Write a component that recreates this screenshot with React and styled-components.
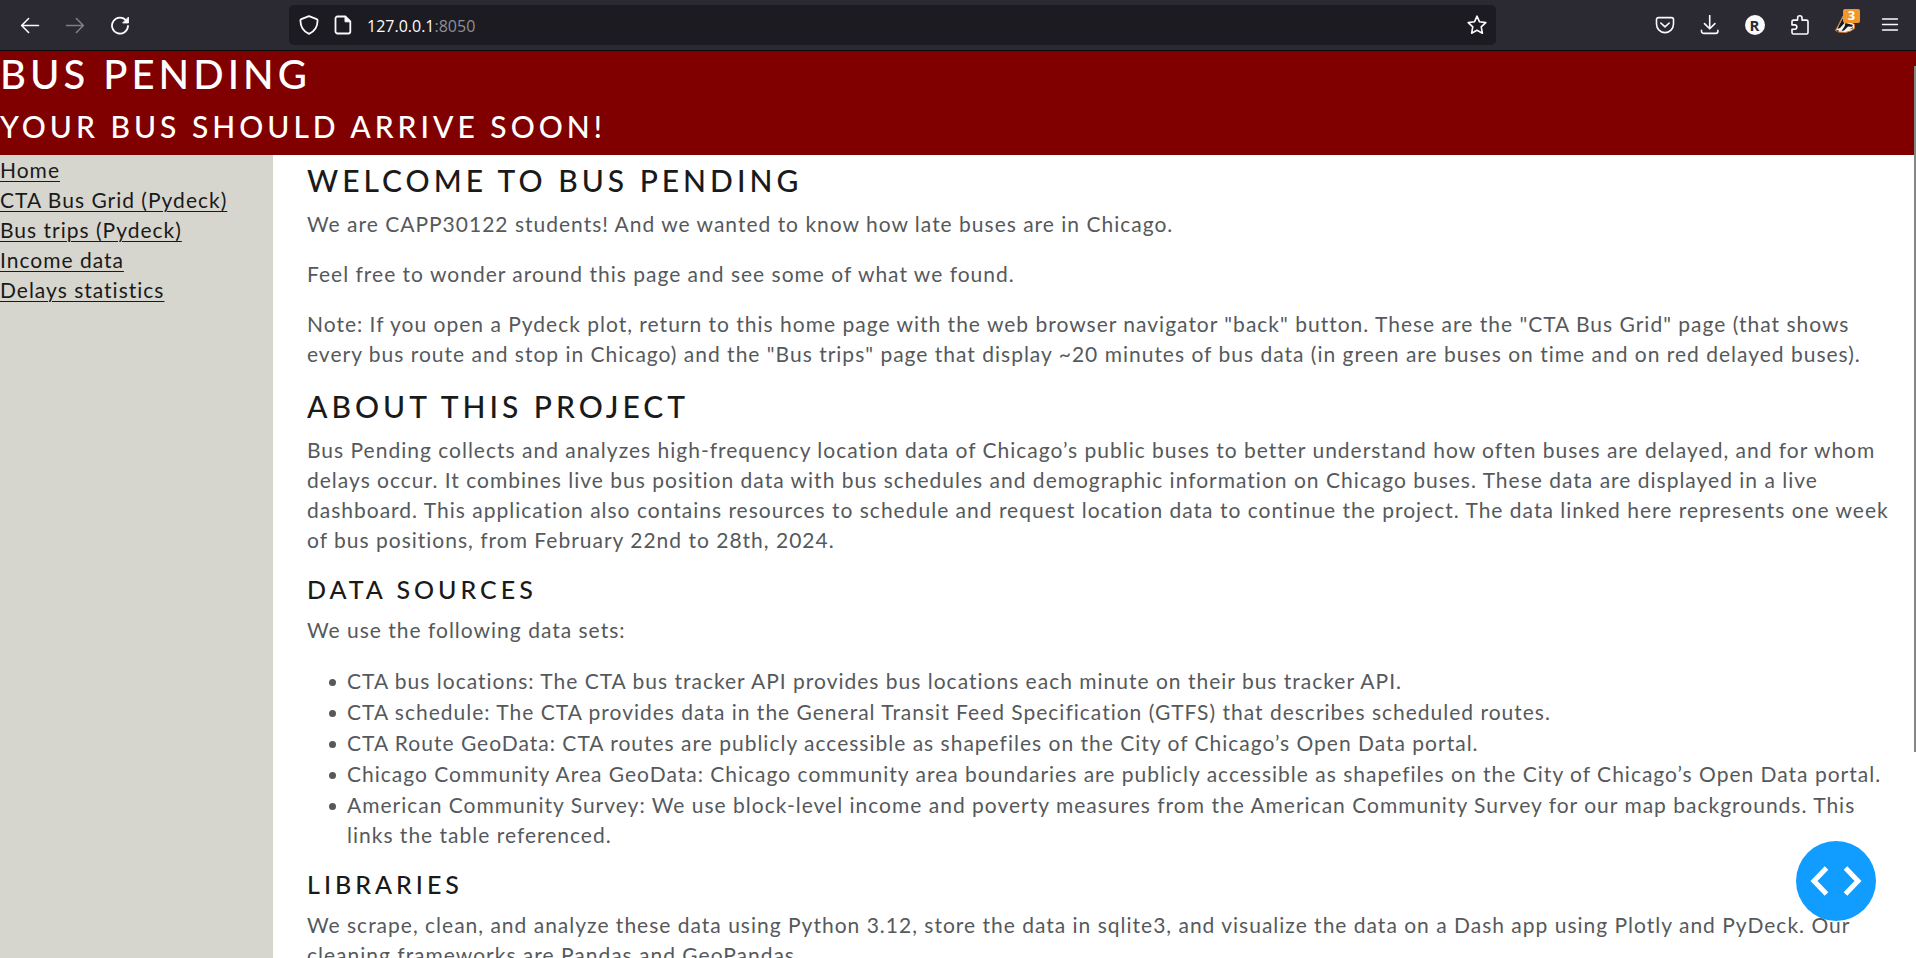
import React from 'react';
import styled, { createGlobalStyle } from 'styled-components';

const GlobalStyle = createGlobalStyle`
  *, *::before, *::after { box-sizing: border-box; }
  body {
    margin: 0;
    background: #ffffff;
    color: #55595c;
    font-family: Lato, "Open Sans", sans-serif;
    font-size: 21px;
    line-height: 30px;
    letter-spacing: 1px;
  }
`;

const Window = styled.div`
  display: flex;
  flex-direction: column;
  height: 100vh;
  overflow: hidden;
`;

const Toolbar = styled.nav`
  display: flex;
  align-items: center;
  flex: none;
  height: 51px;
  padding: 0 4px 0 7px;
  background: #2b2a33;
  border-bottom: 1px solid #0c0c0d;
`;

const ToolGroup = styled.div`
  display: flex;
`;

const ToolButton = styled.button`
  display: flex;
  align-items: center;
  justify-content: center;
  position: relative;
  width: 45px;
  height: 40px;
  padding: 0;
  border: 0;
  background: none;
  color: #fbfbfe;
  opacity: ${(p) => (p.disabled ? 0.4 : 1)};
`;

const AddressBar = styled.div`
  display: flex;
  align-items: center;
  flex: 1;
  height: 40px;
  margin: 0 146px 0 147px;
  padding: 0 8px 0 10px;
  gap: 14px;
  border-radius: 5px;
  background: #1c1b22;
  color: #fbfbfe;
`;

const Address = styled.div`
  flex: 1;
  padding-top: 2px;
  font-family: "Open Sans", sans-serif;
  font-size: 16px;
  letter-spacing: 0;
`;

const Port = styled.span`
  color: #8f8f97;
`;

const StarButton = styled(ToolButton)`
  width: 22px;
`;

const Badge = styled.span`
  position: absolute;
  top: 4px;
  left: 21px;
  width: 17px;
  height: 14px;
  border-radius: 2px;
  background: #f0962d;
  color: #ffffff;
  font: bold 13px/13px "Open Sans", sans-serif;
  letter-spacing: 0;
  text-align: center;
`;

const Viewport = styled.div`
  position: relative;
  display: flex;
  flex-direction: column;
  flex: 1;
  min-height: 0;
  overflow: hidden;
`;

const Banner = styled.header`
  display: flow-root;
  flex: none;
  background: #800000;
`;

const Heading = styled.h2`
  margin: 0 0 12px;
  color: ${(p) => (p.$light ? '#ffffff' : '#1a1a1a')};
  font-size: ${(p) => p.$size}px;
  line-height: calc(1.2em - 2px);
  font-weight: 500;
  letter-spacing: 4px;
  text-transform: uppercase;
`;

const Columns = styled.div`
  display: flex;
  flex: 1;
  min-height: 0;
`;

const Sidebar = styled.nav`
  display: flex;
  flex-direction: column;
  align-items: flex-start;
  flex: none;
  width: 273px;
  background: #d6d6ce;
`;

const SideLink = styled.a`
  color: #1a1a1a;
  text-decoration: underline;
  text-decoration-thickness: 1px;
  text-underline-offset: 3px;
`;

const Content = styled.main`
  flex: 1;
  min-width: 0;
  padding: 8px 14px 0 34px;
`;

const Paragraph = styled.p`
  margin: 0 0 20px;
`;

const List = styled.ul`
  margin: 0 0 20px;
  padding-left: 40px;
  list-style: none;
`;

const Item = styled.li`
  padding-top: 1px;

  &::before {
    content: '';
    display: inline-block;
    width: 7px;
    height: 7px;
    margin: 0 11px 0 -18px;
    border-radius: 50%;
    background: currentColor;
    vertical-align: 3px;
  }
`;

const ScrollThumb = styled.div`
  position: absolute;
  top: 15px;
  right: 0;
  width: 2px;
  height: 686px;
  background: #858585;
`;

const DebugButton = styled.button`
  position: absolute;
  right: 40px;
  bottom: 37px;
  width: 80px;
  height: 80px;
  padding: 0;
  border: 0;
  border-radius: 50%;
  background: #119dff;
`;

const Avatar = styled.span`
  width: 20px;
  height: 20px;
  border-radius: 50%;
  background: #fbfbfe;
  color: #2b2a33;
  font: bold 15px/20px "Open Sans", sans-serif;
  letter-spacing: 0;
  text-align: center;
`;

const Svg = ({ size = 20, sw = 1.6, children }) => (
  <svg
    width={size}
    height={size}
    viewBox="0 0 20 20"
    fill="none"
    stroke="currentColor"
    strokeWidth={sw}
    strokeLinecap="round"
    strokeLinejoin="round"
    aria-hidden="true"
  >
    {children}
  </svg>
);

const BackIcon = () => (
  <Svg><path d="M18.5 10.500H1.8M8.6 3.500l-7 7 7 7" /></Svg>
);
const ForwardIcon = () => (
  <Svg><path d="M1.5 10.500h16.7M11.4 3.500l7 7-7 7" /></Svg>
);
const ReloadIcon = () => (
  <Svg sw={1.8}>
    <path d="M16.3 5.7A8 8 0 1 0 18 11" />
    <path d="M18.4 2.500v5.4H13z" fill="currentColor" strokeWidth="1" />
  </Svg>
);
const ShieldIcon = () => (
  <Svg sw={1.8}><path d="M10 1.1 2.3 4.2c-.6.2-.9.7-.9 1.3.1 6 2.6 10.8 8.6 13.4 6-2.6 8.5-7.4 8.6-13.4 0-.6-.3-1.1-.9-1.3z" /></Svg>
);
const PageIcon = () => (
  <Svg sw={1.8}>
    <path d="M4.5 1.5h7.8l5 5v10a2 2 0 0 1-2 2H4.5a2 2 0 0 1-2-2v-13a2 2 0 0 1 2-2z" />
    <path d="M12 1.5v5.3h5.3z" fill="currentColor" strokeWidth="1" />
  </Svg>
);
const StarIcon = () => (
  <Svg><path d="M10 1.2l2.5 5.6 6.3.8-4.6 4.3 1.2 6.3-5.4-3-5.4 3 1.2-6.3L1.2 7.6l6.3-.8z" /></Svg>
);
const PocketIcon = () => (
  <Svg>
    <path d="M3.5 2.6h13a2 2 0 0 1 2 2v4.500a8.5 8.5 0 0 1-17 0V4.600a2 2 0 0 1 2-2z" />
    <path d="M5.8 8 10 11.900l4.200-3.900" />
  </Svg>
);
const DownloadIcon = () => (
  <Svg>
    <path d="M9.700 .5v13M4.500 8.600l5.200 5.200 5.200-5.200" />
    <path d="M1.500 15.400v.8a2.200 2.200 0 0 0 2.200 2.200h12a2.200 2.200 0 0 0 2.200-2.200v-.8" />
  </Svg>
);
const PuzzleIcon = () => (
  <Svg>
    <path d="M2 9V6.600a1.500 1.500 0 0 1 1.500-1.500h4.100V3a2.200 2.200 0 0 1 4.400 0v2.100h4.500A1.500 1.500 0 0 1 18 6.600v10.900a1.500 1.500 0 0 1-1.500 1.500h-13A1.500 1.500 0 0 1 2 17.500v-3.300h2.700a2.100 2.100 0 0 0 0-4.300H2z" />
  </Svg>
);
const BadgerIcon = () => (
  <svg width="20" height="20" viewBox="0 0 20 20" aria-hidden="true">
    <path d="M8 1 19.5 9.5 19.500 13.500l-4 2.500-5 1.500-7-.5L.5 15.500 3 11z" fill="#f5f2ee" stroke="#d5752b" strokeWidth="1" />
    <path d="M8.500 2 4 10.500 2.500 14l2.500-1 4.500-5z" fill="#17161a" />
    <path d="M10.500 8l7.500 2-1 1.800-4-.4-4 4-2.500.5 3-4.500z" fill="#17161a" />
    <path d="M1 15l3 .5-1 1.500z" fill="#17161a" />
    <path d="M14 14.500l4-2.500 .5 1.500z" fill="#6b6560" />
  </svg>
);
const MenuIcon = () => (
  <Svg><path d="M2.600 4h14.800M2.600 9.500h14.800M2.600 15h14.800" /></Svg>
);

const links = ['Home', 'CTA Bus Grid (Pydeck)', 'Bus trips (Pydeck)', 'Income data', 'Delays statistics'];

const sources = [
  'CTA bus locations: The CTA bus tracker API provides bus locations each minute on their bus tracker API.',
  'CTA schedule: The CTA provides data in the General Transit Feed Specification (GTFS) that describes scheduled routes.',
  'CTA Route GeoData: CTA routes are publicly accessible as shapefiles on the City of Chicago’s Open Data portal.',
  'Chicago Community Area GeoData: Chicago community area boundaries are publicly accessible as shapefiles on the City of Chicago’s Open Data portal.',
  'American Community Survey: We use block-level income and poverty measures from the American Community Survey for our map backgrounds. This links the table referenced.',
];

export default function App() {
  return (
    <Window>
      <GlobalStyle />
      <Toolbar aria-label="Browser toolbar">
        <ToolGroup>
          <ToolButton aria-label="Back"><BackIcon /></ToolButton>
          <ToolButton aria-label="Forward" disabled><ForwardIcon /></ToolButton>
          <ToolButton aria-label="Reload"><ReloadIcon /></ToolButton>
        </ToolGroup>
        <AddressBar>
          <ShieldIcon />
          <PageIcon />
          <Address>127.0.0.1<Port>:8050</Port></Address>
          <StarButton aria-label="Bookmark this page"><StarIcon /></StarButton>
        </AddressBar>
        <ToolGroup>
          <ToolButton aria-label="Save to Pocket"><PocketIcon /></ToolButton>
          <ToolButton aria-label="Downloads"><DownloadIcon /></ToolButton>
          <ToolButton aria-label="Account"><Avatar>R</Avatar></ToolButton>
          <ToolButton aria-label="Extensions"><PuzzleIcon /></ToolButton>
          <ToolButton aria-label="Privacy Badger"><BadgerIcon /><Badge>3</Badge></ToolButton>
          <ToolButton aria-label="Menu"><MenuIcon /></ToolButton>
        </ToolGroup>
      </Toolbar>
      <Viewport>
        <Banner>
          <Heading as="h1" $size={40} $light>Bus Pending</Heading>
          <Heading $size={30} $light>Your bus should arrive soon!</Heading>
        </Banner>
        <Columns>
          <Sidebar aria-label="Pages">
            {links.map((text) => (
              <SideLink key={text} href="#">{text}</SideLink>
            ))}
          </Sidebar>
          <Content>
            <Heading $size={30}>Welcome to Bus Pending</Heading>
            <Paragraph>We are CAPP30122 students! And we wanted to know how late buses are in Chicago.</Paragraph>
            <Paragraph>Feel free to wonder around this page and see some of what we found.</Paragraph>
            <Paragraph>
              Note: If you open a Pydeck plot, return to this home page with the web browser navigator "back" button.
              These are the "CTA Bus Grid" page (that shows every bus route and stop in Chicago) and the "Bus trips"
              page that display ~20 minutes of bus data (in green are buses on time and on red delayed buses).
            </Paragraph>
            <Heading $size={30}>About this project</Heading>
            <Paragraph>
              Bus Pending collects and analyzes high-frequency location data of Chicago’s public buses to better
              understand how often buses are delayed, and for whom delays occur. It combines live bus position data
              with bus schedules and demographic information on Chicago buses. These data are displayed in a live
              dashboard. This application also contains resources to schedule and request location data to continue
              the project. The data linked here represents one week of bus positions, from February 22nd to 28th, 2024.
            </Paragraph>
            <Heading as="h3" $size={25}>Data sources</Heading>
            <Paragraph>We use the following data sets:</Paragraph>
            <List>
              {sources.map((text) => (
                <Item key={text}>{text}</Item>
              ))}
            </List>
            <Heading as="h3" $size={25}>Libraries</Heading>
            <Paragraph>
              We scrape, clean, and analyze these data using Python 3.12, store the data in sqlite3, and visualize the
              data on a Dash app using Plotly and PyDeck. Our cleaning frameworks are Pandas and GeoPandas.
            </Paragraph>
          </Content>
        </Columns>
        <ScrollThumb />
        <DebugButton aria-label="Toggle debug menu">
          <svg width="80" height="80" viewBox="0 0 80 80" fill="none" stroke="#ffffff" strokeWidth="5" aria-hidden="true">
            <path d="M30.5 27 18 40l12.5 13M49.5 27 62 40 49.5 53" />
          </svg>
        </DebugButton>
      </Viewport>
    </Window>
  );
}
